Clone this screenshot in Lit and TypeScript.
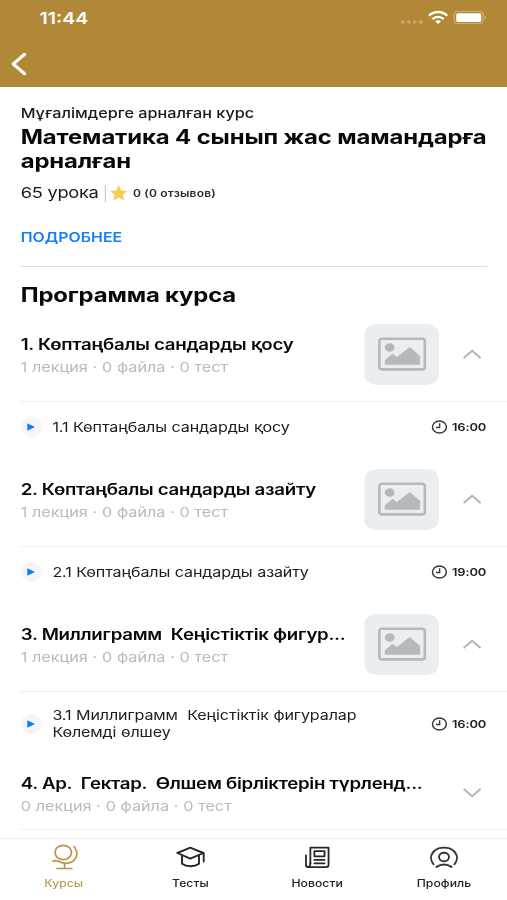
import { LitElement, html, css, svg, nothing } from "lit";
import { customElement, property } from "lit/decorators.js";

interface Lesson { title: string; time: string }
interface Section { title: string; meta: string; lesson?: Lesson }

const SECTIONS: Section[] = [
  {
    title: "1. Көптаңбалы сандарды қосу", meta: "1 лекция · 0 файла · 0 тест",
    lesson: { title: "1.1 Көптаңбалы сандарды қосу", time: "16:00" },
  },
  {
    title: "2. Көптаңбалы сандарды азайту", meta: "1 лекция · 0 файла · 0 тест",
    lesson: { title: "2.1 Көптаңбалы сандарды азайту", time: "19:00" },
  },
  {
    title: "3. Миллиграмм  Кеңістіктік фигур...", meta: "1 лекция · 0 файла · 0 тест",
    lesson: { title: "3.1 Миллиграмм  Кеңістіктік фигуралар\nКөлемді өлшеу", time: "16:00" },
  },
  { title: "4. Ар.  Гектар.  Өлшем бірліктерін түрленд...", meta: "0 лекция · 0 файла · 0 тест" },
];

// Icons are drawn in wide screen units and squeezed to the 416px canvas.
const STRETCH = 1.21875;
const icon = (w: number, h: number, body: unknown) => html`<svg
  width=${w / STRETCH} height=${h} viewBox="0 0 ${w} ${h}" preserveAspectRatio="none" fill="none">${body}</svg>`;

const ICONS = {
  back: () => icon(16, 24, svg`<path d="M13.700 2.300 2.200 12l11.500 9.700" stroke="#fff" stroke-width="3.100" stroke-linecap="round" stroke-linejoin="round"/>`),
  status: () => icon(88, 16, svg`
    <g fill="#c9a663"><circle cx="3" cy="12" r="2"/><circle cx="9" cy="12" r="2"/><circle cx="15" cy="12" r="2"/><circle cx="21" cy="12" r="2"/></g>
    <g stroke="#fff" stroke-width="2.400"><path d="M29.200 5.600c5.200-4.800 13-4.800 18.200 0"/><path d="M32.600 9.100c3.300-3 8.100-3 11.400 0"/></g>
    <path d="M35.300 11.300c1.700-1.400 4.300-1.400 6 0l-3 2.800z" fill="#fff"/>
    <rect x="54.500" y="1.500" width="29" height="12" rx="3.500" stroke="#cdae70" stroke-width="1.200"/>
    <rect x="56.500" y="3.200" width="25" height="8.800" rx="1.600" fill="#fff"/>
    <path d="M85 5.500c2 .6 2 3.400 0 4z" fill="#d0b276"/>`),
  star: () => icon(18, 17, svg`<path d="M9 .1l2.500 5.500 6.300.5-4.800 3.800 1.600 5.900L9 12.600l-5.600 3.200L5 9.900.2 6.100l6.300-.5z" fill="#fccb55"/>`),
  picture: () => icon(49, 34, svg`
    <rect x="1.500" y="1.800" width="45.500" height="30.600" rx="2.500" stroke="#b5b9bc" stroke-width="2.600"/>
    <ellipse cx="11.900" cy="10.500" rx="4.900" ry="4.300" fill="#b5b9bc"/>
    <path d="M7 27.800v-4.500l7.700-6.500 4.300 3.300L32 10l10.300 9v8.800z" fill="#b5b9bc"/>`),
  up: () => icon(18, 10, svg`<path d="M1.200 8.600 9 1.800l7.800 6.800" stroke="#b4b4b6" stroke-width="2" stroke-linecap="round"/>`),
  down: () => icon(18, 10, svg`<path d="M1.200 1.400 9 8.200l7.800-6.800" stroke="#b4b4b6" stroke-width="2" stroke-linecap="round"/>`),
  play: () => icon(10, 8, svg`<path d="M.5.200 8.100 4 .5 7.800z" fill="#0a7aff"/>`),
  clock: () => icon(16, 14, svg`<ellipse cx="8" cy="7" rx="7" ry="6" stroke="#3a3a3a" stroke-width="1.500"/><path d="M8.200 3.300v4.200H4.500" stroke="#3a3a3a" stroke-width="1.400"/>`),
};

const TAB_ICONS = {
  globe: () => icon(28, 28, svg`<g stroke="#b9944d" stroke-width="1.700" stroke-linecap="round">
    <ellipse cx="13.300" cy="9.500" rx="8.200" ry="7.100"/>
    <path d="M24 3.500c4.700 5.300 3.500 12.200-2 15.300-5 2.800-9.500 1.500-13-.3-2-1-4.300-1.400-6-.2M14.600 20.300v5M7 25.500h15"/></g>`),
  cap: () => icon(30, 28, svg`<g stroke="#262626" stroke-width="1.900" stroke-linejoin="round" stroke-linecap="round">
    <path d="M1.800 10 14.800 4.700l13.200 5.300-13.200 5.600z"/>
    <path d="M6.500 12.500v8.300c4.500 3.200 12.500 3.200 17 0v-8.300M28.200 10.500v8"/></g>`),
  news: () => icon(28, 28, svg`<g stroke="#262626" stroke-width="1.800" stroke-linejoin="round" stroke-linecap="round">
    <path d="M6.900 20.500V4.600h18.200v17.200c0 1.500-.8 2.300-2.400 2.300H4.800c-1.600 0-2.300-.8-2.300-2.300V12.500"/><path d="M6.900 20c0 3-.8 4.100-2.500 4.100"/>
    <path d="M10.900 8.200h10.200v5.100H10.900zM10.900 16.900h10.200M10.900 20.400h10.200"/></g>`),
  user: () => icon(30, 28, svg`<g stroke="#333" stroke-width="1.900" stroke-linecap="round">
    <path d="M4.600 21.300C1.600 17.800 1.300 13 3.800 9.600 6.200 6.300 10.300 4.600 15 4.600s8.800 1.700 11.200 5c2.500 3.400 2.200 8.200-.8 11.700"/>
    <ellipse cx="15" cy="14" rx="5" ry="4.300"/><path d="M7.500 23.900c4.600-2.900 10.400-2.900 15 0"/></g>`),
};

@customElement("course-section")
class CourseSection extends LitElement {
  @property({ attribute: false }) section!: Section;

  static styles = css`
    :host { display: block; }
    svg { display: block; }
    .head { box-sizing: border-box; height: 95px; margin-left: 17px; padding-right: 21px; display: flex; align-items: center; border-bottom: 1px solid #f1f1f2; }
    .head.closed { height: 73px; }
    .text { flex: 1; min-width: 0; padding-top: 4px; }
    .title { font: 600 15.3px/22px Inter, sans-serif; letter-spacing: -0.22px; white-space: pre; color: #080808; }
    .meta { font: 400 13.3px/22px Inter, sans-serif; word-spacing: 0.15px; white-space: pre; color: #b8babd; }
    .thumb { box-sizing: border-box; width: 60.3px; height: 61px; padding-left: 2px; margin-right: 20.5px; border-radius: 10px; background: #eaeef1; display: grid; place-items: center; flex: none; }
    .lesson { box-sizing: border-box; height: 50px; padding: 0 17px; display: flex; align-items: center; }
    .lesson.tall { height: 65px; padding-bottom: 1px; }
    .dot { width: 18px; height: 20px; border-radius: 50%; background: #f6f6f7; display: grid; place-items: center; flex: none; }
    .name { flex: 1; margin-left: 8px; font: 400 13.2px/17px Inter, sans-serif; letter-spacing: -0.1px; word-spacing: 0.2px; white-space: pre; color: #1d1d1f; }
    .time { display: flex; align-items: center; gap: 3.5px; font: 600 10.6px/14px Inter, sans-serif; letter-spacing: -0.1px; color: #222; }
    .time span { padding-top: 1px; }
  `;

  render() {
    const { title, meta, lesson } = this.section;
    return html`
      <div class="head ${lesson ? "" : "closed"}">
        <div class="text"><div class="title">${title}</div><div class="meta">${meta}</div></div>
        ${lesson ? html`<div class="thumb">${ICONS.picture()}</div>` : nothing}
        ${lesson ? ICONS.up() : ICONS.down()}
      </div>
      ${lesson ? html`<div class="lesson ${lesson.title.includes("\n") ? "tall" : ""}">
        <span class="dot">${ICONS.play()}</span>
        <span class="name">${lesson.title}</span>
        <span class="time">${ICONS.clock()}<span>${lesson.time}</span></span>
      </div>` : nothing}`;
  }
}

@customElement("app-root")
class AppRoot extends LitElement {
  static styles = css`
    :host { display: block; width: 507px; height: 900px; overflow: hidden; background: #fff; }
    svg { display: block; }
    .screen { width: 416px; height: 900px; display: flex; flex-direction: column; transform: scaleX(1.21875); transform-origin: 0 0; font-family: Inter, sans-serif; color: #080808; }
    .top { height: 87px; background: #b08838; flex: none; }
    .status { display: flex; justify-content: space-between; align-items: center; height: 35px; padding: 0 15.7px 0 32.5px; }
    .clock { font: 600 16px/20px Inter, sans-serif; color: #fff; }
    .nav { padding: 17px 0 0 9px; }
    .intro { margin: 0 16px 0 17px; padding-top: 17px; height: 162px; border-bottom: 1px solid #dedee0; flex: none; }
    .kind { font: 500 13.3px/18px Inter, sans-serif; color: #1a1a1a; }
    h1 { margin: 3px 0 0; font: 700 19.6px/24px Inter, sans-serif; letter-spacing: -0.11px; white-space: pre; }
    .stats { display: flex; align-items: center; margin-top: 10px; height: 20px; }
    .count { font: 400 15px/20px Inter, sans-serif; letter-spacing: -0.24px; color: #1a1a1a; }
    .bar { width: 1px; height: 17px; margin: 0 3.5px 0 5px; background: #c9c9cb; }
    .rating { margin-left: 4px; font: 600 9.9px/14px Inter, sans-serif; letter-spacing: 0.14px; color: #2a2a2a; }
    .more { margin-top: 25px; font: 600 13px/18px Inter, sans-serif; letter-spacing: 0.03px; color: #147efb; }
    h2 { margin: 0 0 0 17px; padding-top: 16px; height: 24px; font: 700 19.6px/24px Inter, sans-serif; letter-spacing: -0.13px; }
    .list { flex: 1; overflow: hidden; min-height: 0; }
    .tabs { height: 61px; flex: none; border-top: 1px solid #ececee; display: grid; grid-template-columns: repeat(4, 1fr); background: #fff; }
    .tab { display: flex; flex-direction: column; align-items: center; gap: 5px; padding: 4px 0 0 0.5px; font: 500 10px/14px Inter, sans-serif; letter-spacing: 0.03px; color: #222; }
    .tab.on { color: #c09c57; }
  `;

  render() {
    const tabs = [
      ["Курсы", TAB_ICONS.globe], ["Тесты", TAB_ICONS.cap], ["Новости", TAB_ICONS.news], ["Профиль", TAB_ICONS.user],
    ] as const;
    return html`<div class="screen">
      <header class="top">
        <div class="status"><span class="clock">11:44</span>${ICONS.status()}</div>
        <div class="nav">${ICONS.back()}</div>
      </header>
      <section class="intro">
        <div class="kind">Мұғалімдерге арналған курс</div>
        <h1>${"Математика 4 сынып жас мамандарға\nарналған"}</h1>
        <div class="stats"><span class="count">65 урока</span><i class="bar"></i>${ICONS.star()}<span class="rating">0 (0 отзывов)</span></div>
        <div class="more">ПОДРОБНЕЕ</div>
      </section>
      <div class="list">
        <h2>Программа курса</h2>
        ${SECTIONS.map((s) => html`<course-section .section=${s}></course-section>`)}
      </div>
      <nav class="tabs">
        ${tabs.map(([label, draw], i) => html`<div class="tab ${i === 0 ? "on" : ""}">${draw()}<span>${label}</span></div>`)}
      </nav>
    </div>`;
  }
}
